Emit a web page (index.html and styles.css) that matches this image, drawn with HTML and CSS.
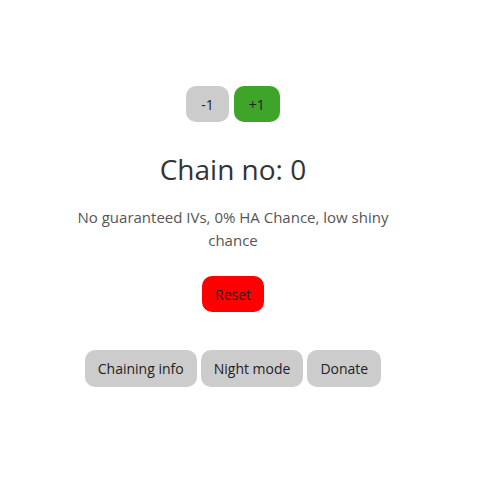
FILE: index.html
```html
<!DOCTYPE html>
<html>
<head>
<meta charset="utf-8">
<link rel="stylesheet" href="styles.css">
</head>
<body>
<div class="wrap">
  <div class="counter">
    <button class="btn btn-gray btn-sm">-1</button>
    <button class="btn btn-green btn-sm">+1</button>
  </div>
  <h1 class="title">Chain no: 0</h1>
  <p class="desc">No guaranteed IVs, 0% HA Chance, low shiny chance</p>
  <div class="reset-row">
    <button class="btn btn-red">Reset</button>
  </div>
  <div class="footer">
    <button class="btn btn-gray">Chaining info</button>
    <button class="btn btn-gray">Night mode</button>
    <button class="btn btn-gray">Donate</button>
  </div>
</div>
</body>
</html>
```
FILE: styles.css
```css
body {
  margin: 8px;
  background: #fff;
  font-family: "Open Sans", "Noto Sans", sans-serif;
  color: #333;
}
.wrap {
  width: 450px;
  text-align: center;
  padding-top: 78px;
}
.counter {
  display: flex;
  justify-content: center;
  gap: 5px;
}
.btn {
  border: none;
  border-radius: 10px;
  font-family: inherit;
  font-size: 14px;
  color: #222;
  padding: 0 13px;
  height: 37px;
}
.btn-sm {
  height: 36px;
  padding: 0 15px;
}
.btn-gray { background: #cccccc; }
.btn-green { background: #3fa52a; }
.btn-red { background: #ff0000; color: #222; height: 36px; }
.title {
  font-size: 28px;
  font-weight: normal;
  margin: 27px 0 0;
  line-height: 40px;
  color: #333;
}
.desc {
  font-size: 15px;
  line-height: 23px;
  color: #555;
  width: 330px;
  margin: 17px auto 0;
}
.reset-row {
  margin-top: 24px;
  display: flex;
  justify-content: center;
}
.footer {
  margin-top: 38px;
  display: flex;
  justify-content: center;
  gap: 4px;
}
```
